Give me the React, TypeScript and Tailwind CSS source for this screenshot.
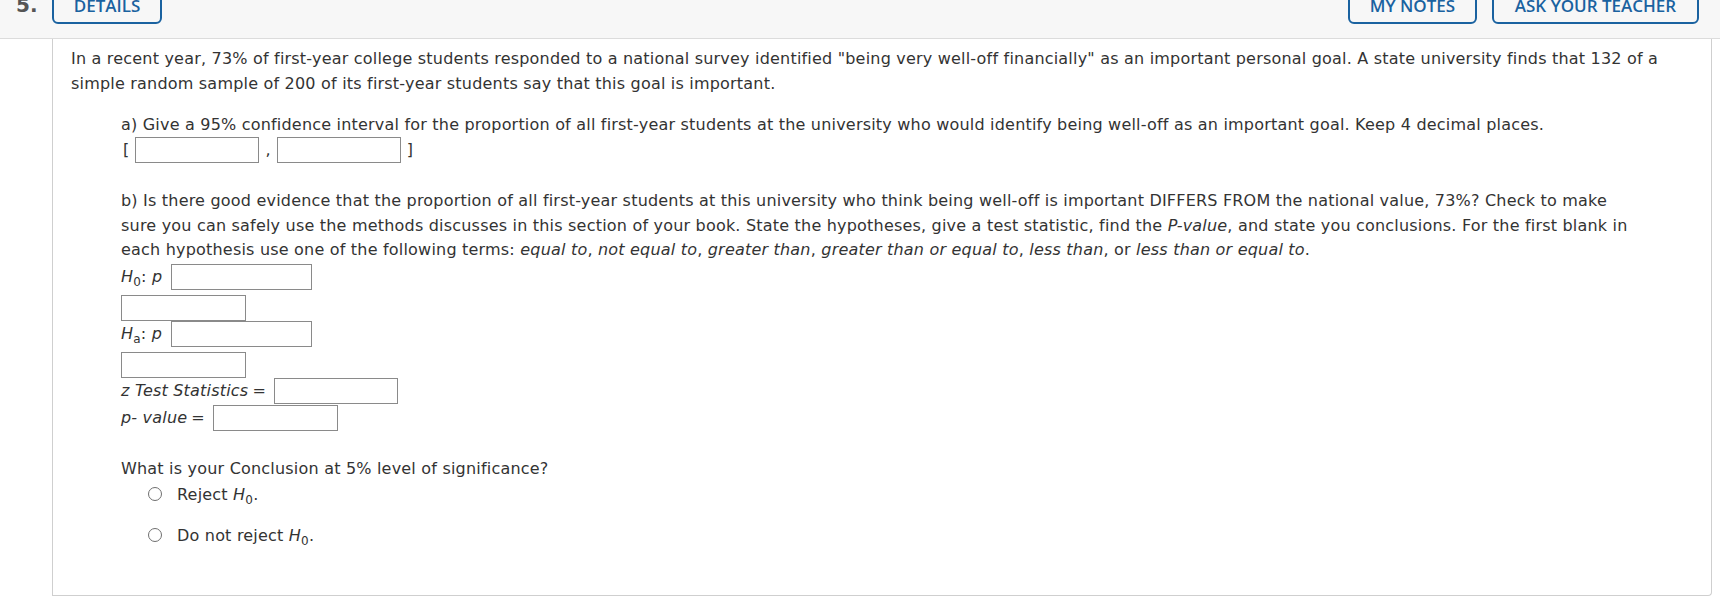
import React from 'react';

const font = { fontFamily: '"DejaVu Sans", Verdana, sans-serif' };
const btnFont = { fontFamily: '"Open Sans", sans-serif' };

function Box({ w }: { w: string }) {
  return <span className={`inline-block h-[26px] ${w} border border-[#8a8a8a] bg-white`} />;
}

function H({ sub }: { sub: string }) {
  return (
    <span>
      <i>H</i>
      <sub className="text-[12px] not-italic relative top-[4px]">{sub}</sub>
    </span>
  );
}

function Radio({ children }: { children: React.ReactNode }) {
  return (
    <div className="flex items-center h-[25px] pl-[27px]">
      <span className="inline-block w-[14px] h-[14px] rounded-full border-[1.5px] border-[#6f6f6f] bg-white" />
      <span className="ml-[15px]">{children}</span>
    </div>
  );
}

export default function App() {
  return (
    <div className="w-[1720px] h-[597px] bg-white text-[#333] overflow-hidden" style={font}>
      {/* header strip */}
      <div className="h-[39px] bg-[#f7f7f7] border-b border-[#dcdcdc] flex items-end pb-[14px] overflow-hidden">
        <span className="w-[52px] pl-[16px] text-[20px] font-bold text-[#555] leading-none mb-[9px]">5.</span>
        <button className="h-[36px] w-[110px] border-2 border-[#1a62a0] rounded-[6px] text-[#1a62a0] text-[17px] font-semibold" style={btnFont}>
          DETAILS
        </button>
        <div className="flex-1" />
        <button className="h-[36px] w-[129px] border-2 border-[#1a62a0] rounded-[6px] text-[#1a62a0] text-[17px] font-semibold" style={btnFont}>
          MY NOTES
        </button>
        <button className="ml-[15px] mr-[21px] h-[36px] w-[207px] border-2 border-[#1a62a0] rounded-[6px] text-[#1a62a0] text-[17px] font-semibold" style={btnFont}>
          ASK YOUR TEACHER
        </button>
      </div>

      {/* card */}
      <div className="ml-[52px] mr-[8px] h-[557px] border-l border-r border-b border-[#cfcfcf] rounded-br-[4px] pl-[18px] pr-[18px] pt-[7px] text-[16px] tracking-[0.2px] leading-[25px]">
        <p>
          In a recent year, 73% of first-year college students responded to a national survey identified "being very well-off financially" as an important personal goal. A state university finds that 132 of a simple random sample of 200 of its first-year students say that this goal is important.
        </p>

        <div className="ml-[50px] mr-[50px]">
          <p className="mt-[16px]">
            a) Give a 95% confidence interval for the proportion of all first-year students at the university who would identify being well-off as an important goal. Keep 4 decimal places.
          </p>
          <div className="flex items-center h-[25px]">
            <span className="ml-[2px] mr-[6px]">[</span>
            <Box w="w-[124px]" />
            <span className="mx-[6px]">,</span>
            <Box w="w-[124px]" />
            <span className="ml-[6px]">]</span>
          </div>

          <p className="mt-[27px] leading-[24.5px]">
            b) Is there good evidence that the proportion of all first-year students at this university who think being well-off is important DIFFERS FROM the national value, 73%? Check to make sure you can safely use the methods discusses in this section of your book. State the hypotheses, give a test statistic, find the <i>P-value</i>, and state you conclusions. For the first blank in each hypothesis use one of the following terms: <i>equal to</i>, <i>not equal to</i>, <i>greater than</i>, <i>greater than or equal to</i>, <i>less than</i>, or <i>less than or equal to</i>.
          </p>

          <div className="flex items-center h-[26px] mt-[1px]">
            <H sub="0" />
            <span>:&nbsp;</span>
            <i>p</i>
            <span className="ml-[9px] flex"><Box w="w-[141px]" /></span>
          </div>
          <div className="flex items-center h-[26px] mt-[5px]">
            <Box w="w-[125px]" />
          </div>
          <div className="flex items-center h-[26px]">
            <H sub="a" />
            <span>:&nbsp;</span>
            <i>p</i>
            <span className="ml-[9px] flex"><Box w="w-[141px]" /></span>
          </div>
          <div className="flex items-center h-[26px] mt-[5px]">
            <Box w="w-[125px]" />
          </div>
          <div className="flex items-center h-[26px]">
            <i>z Test Statistics</i>
            <span className="ml-[4px] mr-[8px]">=</span>
            <Box w="w-[124px]" />
          </div>
          <div className="flex items-center h-[26px] mt-[1px]">
            <i>p- value</i>
            <span className="ml-[4px] mr-[8px]">=</span>
            <Box w="w-[125px]" />
          </div>

          <p className="mt-[25px]">What is your Conclusion at 5% level of significance?</p>
          <div className="mt-[1px]">
            <Radio>
              Reject <H sub="0" />.
            </Radio>
            <div className="mt-[16px]">
              <Radio>
                Do not reject <H sub="0" />.
              </Radio>
            </div>
          </div>
        </div>
      </div>
    </div>
  );
}
